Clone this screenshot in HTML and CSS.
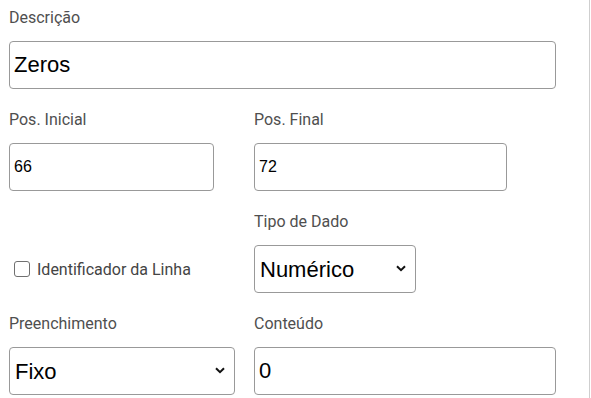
FILE: index.html
```html
<!DOCTYPE html>
<html lang="pt">
<head>
<meta charset="utf-8">
<link rel="stylesheet" href="styles.css">
</head>
<body>
<div class="panel">
  <form class="form">
    <div class="field span2">
      <label class="lbl">Descrição</label>
      <input class="inp big w-547" type="text" value="Zeros">
    </div>
    <div class="field">
      <label class="lbl">Pos. Inicial</label>
      <input class="inp small w-205" type="text" value="66">
    </div>
    <div class="field">
      <label class="lbl">Pos. Final</label>
      <input class="inp small w-253" type="text" value="72">
    </div>
    <div class="field check-field">
      <label class="chk">
        <input class="box" type="checkbox">
        <span>Identificador da Linha</span>
      </label>
    </div>
    <div class="field">
      <label class="lbl">Tipo de Dado</label>
      <div class="sel w-162">
        <select class="inp big"><option>Numérico</option></select>
        <svg class="chev" width="10" height="7" viewBox="0 0 10 7"><path d="M1 1.2 L5 5.2 L9 1.2" fill="none" stroke="#111" stroke-width="2"/></svg>
      </div>
    </div>
    <div class="field">
      <label class="lbl">Preenchimento</label>
      <div class="sel w-226">
        <select class="inp big"><option>Fixo</option></select>
        <svg class="chev" width="10" height="7" viewBox="0 0 10 7"><path d="M1 1.2 L5 5.2 L9 1.2" fill="none" stroke="#111" stroke-width="2"/></svg>
      </div>
    </div>
    <div class="field">
      <label class="lbl">Conteúdo</label>
      <input class="inp big w-302" type="text" value="0">
    </div>
  </form>
</div>
</body>
</html>
```

FILE: styles.css
```css
html, body {
  margin: 0;
  padding: 0;
  background: #fff;
  overflow: hidden;
}

.panel {
  width: 589px;
  height: 398px;
  border-right: 1px solid #cfcfcf;
  box-sizing: content-box;
}

.form {
  display: grid;
  grid-template-columns: 245px 302px;
  row-gap: 22px;
  padding: 9px 0 0 9px;
  margin: 0;
}

.span2 {
  grid-column: 1 / span 2;
}

.field {
  display: flex;
  flex-direction: column;
  align-items: flex-start;
}

.lbl {
  display: block;
  font-family: Roboto, "Liberation Sans", sans-serif;
  font-size: 16px;
  line-height: 18px;
  color: #4f4f4f;
  margin-bottom: 14px;
}

.inp {
  box-sizing: border-box;
  height: 48px;
  margin: 0;
  border: 1px solid #999;
  border-radius: 4px;
  background: #fff;
  color: #000;
  padding: 0 4px;
  font-family: "Liberation Sans", Arial, sans-serif;
  outline: none;
}

.big {
  font-size: 22px;
}

.small {
  font-size: 16px;
  padding: 0 4px;
}

.w-547 { width: 547px; }
.w-205 { width: 205px; }
.w-253 { width: 253px; }
.w-162 { width: 162px; }
.w-226 { width: 226px; }
.w-302 { width: 302px; }

.sel {
  position: relative;
  height: 48px;
}

.sel select {
  -webkit-appearance: none;
  appearance: none;
  width: 100%;
  padding: 0 24px 0 5px;
}

.chev {
  position: absolute;
  right: 10px;
  top: 20px;
  pointer-events: none;
}

.check-field {
  justify-content: flex-end;
}

.chk {
  height: 48px;
  display: flex;
  align-items: center;
  font-family: Roboto, "Liberation Sans", sans-serif;
  font-size: 16px;
  color: #444;
}

.box {
  -webkit-appearance: none;
  appearance: none;
  box-sizing: border-box;
  width: 16px;
  height: 16px;
  margin: 0 7px 0 5px;
  border: 1.5px solid #707070;
  border-radius: 3px;
  background: #fff;
}
```
